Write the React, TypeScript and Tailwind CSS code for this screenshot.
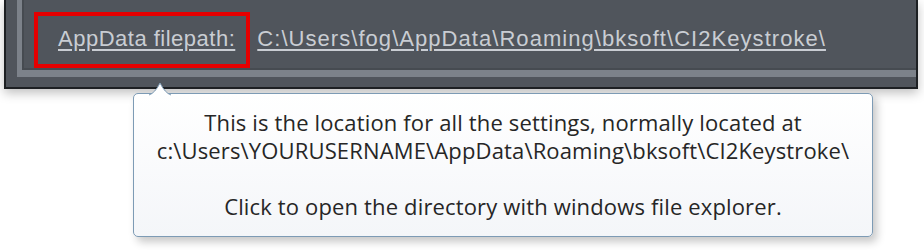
import React from 'react'

const TOOLTIP_LINES = [
  'This is the location for all the settings, normally located at',
  'c:\\Users\\YOURUSERNAME\\AppData\\Roaming\\bksoft\\CI2Keystroke\\',
  '',
  'Click to open the directory with windows file explorer.',
]

const App = () => {
  return (
    <div className="relative w-[924px] h-[250px] bg-white overflow-hidden">
      {/* settings panel */}
      <div className="ml-[4px] w-[914px] h-[89px] bg-[#50555c] border-l-2 border-b-2 border-r-2 border-[#1d2023] shadow-[0_4px_10px_rgba(0,0,0,0.25)]">
        <div className="ml-[11px] h-[77px] border-l-[5px] border-b-[7px] border-[#7c828a]">
          <div className="h-full border-l-2 border-b-2 border-[#464b51] flex items-start pt-[12px] pl-[10px] font-['Liberation_Sans',Arial,sans-serif] text-[22px] text-[#c9cdd3]">
            <div className="h-[56px] border-4 border-[#e50000] pl-[20px] pr-[11px] pb-[3px] flex items-center tracking-[0.5px]">
              <span className="underline underline-offset-[3px] leading-none">AppData filepath:</span>
            </div>
            <div className="h-[56px] ml-[7px] pb-[3px] flex items-center tracking-[1.05px]">
              <span className="underline underline-offset-[3px] leading-none">
                C:\Users\fog\AppData\Roaming\bksoft\CI2Keystroke\
              </span>
            </div>
          </div>
        </div>
      </div>

      {/* tooltip */}
      <div className="absolute left-[133px] top-[93px] w-[740px] h-[144px] rounded-[5px] border border-[#7d9bb5] bg-gradient-to-b from-white to-[#f4f6f9] shadow-[4px_5px_8px_rgba(0,0,0,0.22)] pt-[14px] text-center font-['Open_Sans','Noto_Sans',sans-serif] text-[22px] tracking-[0.15px] leading-[28px] text-[#262626]">
        <svg
          className="absolute left-[15px] top-[-12px]"
          width="22"
          height="14"
          viewBox="0 0 22 14"
        >
          <path d="M0 13 Q6 11 11 1 Q16 11 22 13 Z" fill="#ffffff" />
          <path d="M0 13 Q6 11 11 1 Q16 11 22 13" fill="none" stroke="#7d9bb5" strokeWidth="1" />
        </svg>
        {TOOLTIP_LINES.map((line, i) => (
          <div key={i} className="h-[28px] whitespace-pre">
            {line}
          </div>
        ))}
      </div>
    </div>
  )
}

export default App
